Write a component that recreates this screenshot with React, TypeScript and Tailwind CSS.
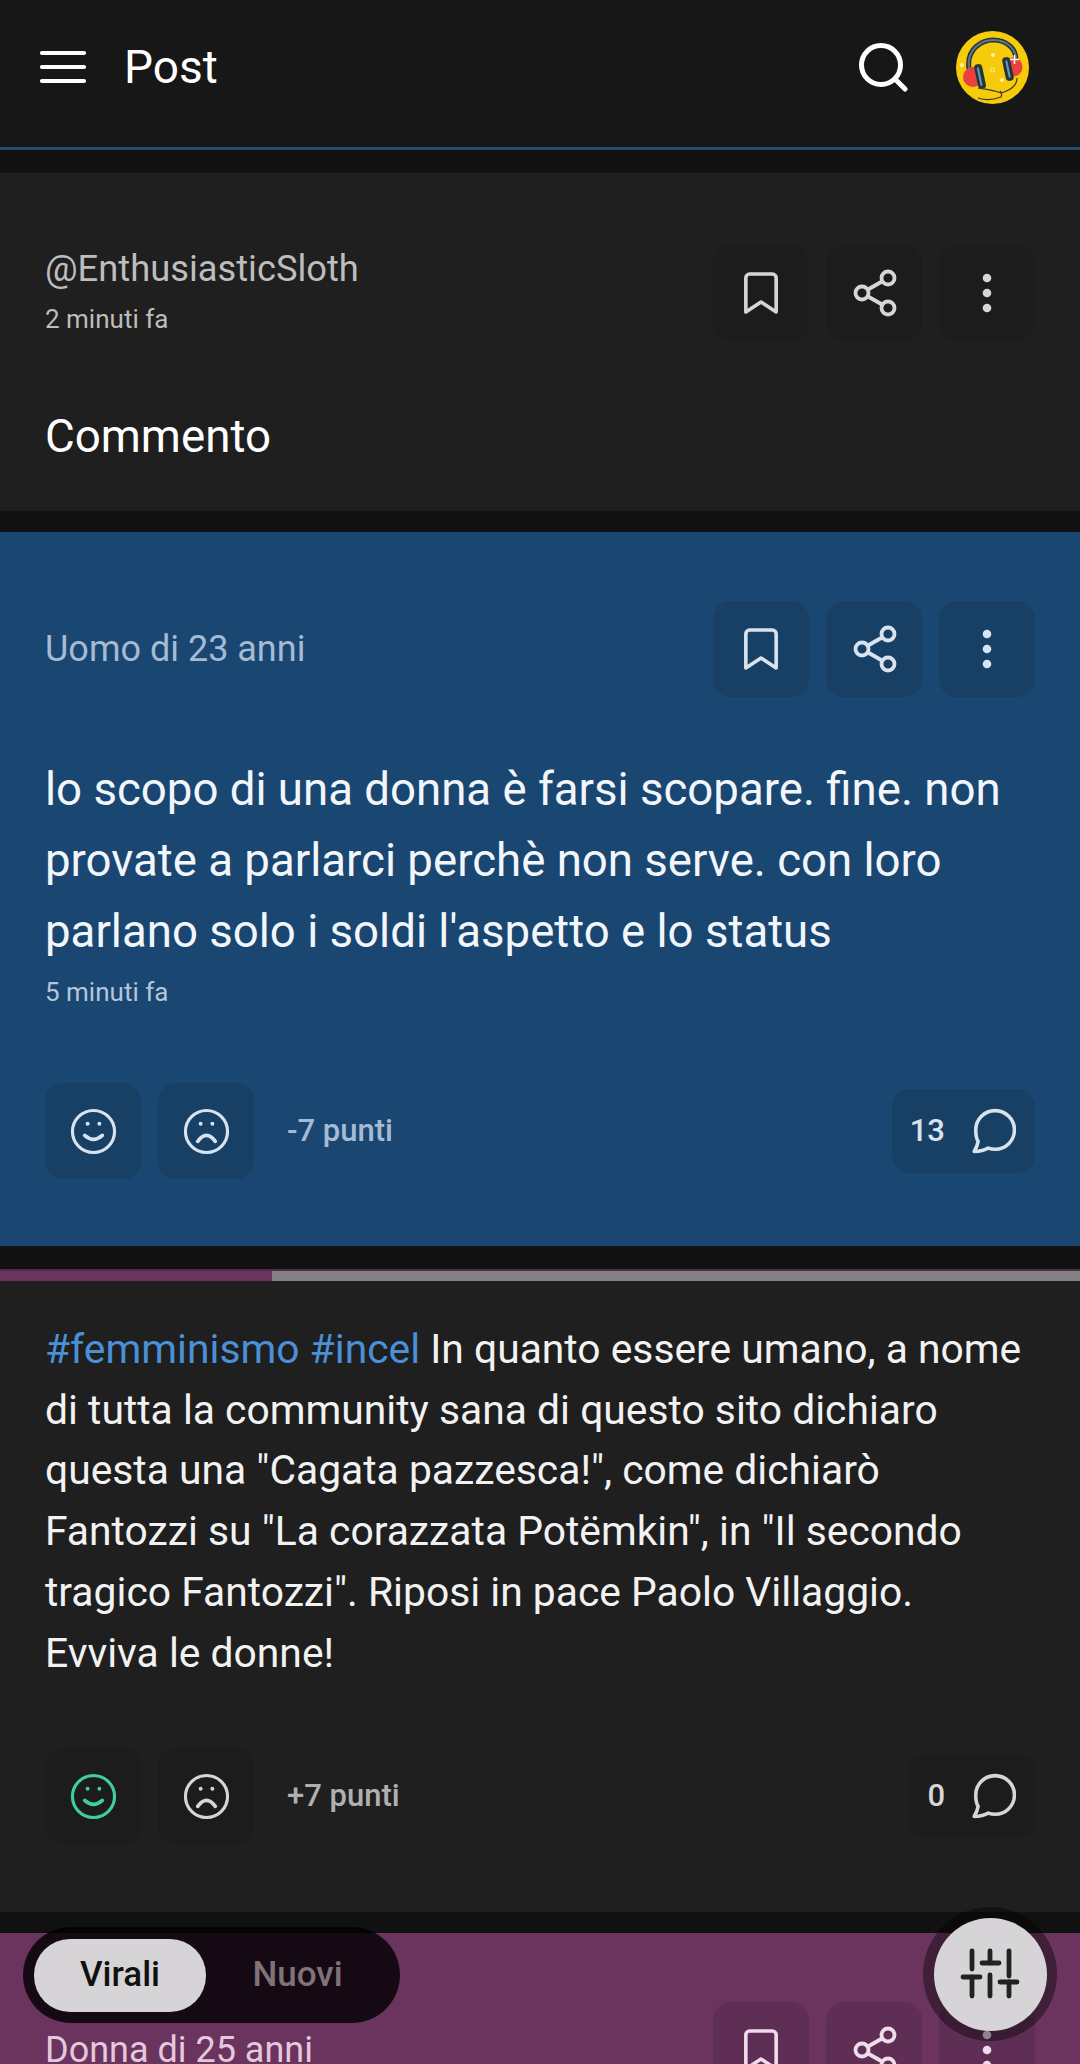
function Smile({ className }: { className?: string }) {
  return (
    <svg viewBox="0 0 48 48" fill="none" stroke="currentColor" strokeWidth="3.200" strokeLinecap="round" className={className}>
      <circle cx="24" cy="24" r="21.500" />
      <path d="M15 28Q24 36 33 28" strokeWidth="3.800" />
      <circle cx="18" cy="16" r="2" fill="currentColor" stroke="none" />
      <circle cx="30" cy="16" r="2" fill="currentColor" stroke="none" />
    </svg>
  );
}

function Frown({ className }: { className?: string }) {
  return (
    <svg viewBox="0 0 48 48" fill="none" stroke="currentColor" strokeWidth="3.200" strokeLinecap="round" className={className}>
      <circle cx="24" cy="24" r="21.500" />
      <path d="M15 34Q24 22 33 34" strokeWidth="3.800" />
      <circle cx="18" cy="16" r="2" fill="currentColor" stroke="none" />
      <circle cx="30" cy="16" r="2" fill="currentColor" stroke="none" />
    </svg>
  );
}

function Bubble({ className }: { className?: string }) {
  return (
    <svg viewBox="0 0 44 44" fill="none" stroke="currentColor" strokeWidth="3.400" strokeLinejoin="round" className={className}>
      <path d="M24 2.500c10.200 0 18.500 8.200 18.500 18.500S34.200 39.500 24 39.500c-2.500 0-4.500-.4-6.500-1.200-3.500 2.200-8 3.200-13.500 3.200 1.800-3 3.300-6 3.800-9.700C5.800 29 5.500 25 5.500 21 5.500 10.700 13.800 2.500 24 2.500Z" />
    </svg>
  );
}

function BookmarkIcon() {
  return (
    <svg viewBox="0 0 38 46" className="w-[36px] h-[44px]" fill="none" stroke="currentColor" strokeWidth="3.800" strokeLinejoin="round" strokeLinecap="round">
      <path d="M3 7a4 4 0 0 1 4-4h24a4 4 0 0 1 4 4v36L19 32.500 3 43Z" />
    </svg>
  );
}

function ShareIcon() {
  return (
    <svg viewBox="0 0 48 48" className="w-12 h-12 ml-[2px]" fill="none" stroke="currentColor" strokeWidth="3.800">
      <circle cx="11" cy="24" r="6.500" />
      <circle cx="37" cy="9" r="6.500" />
      <circle cx="37" cy="39" r="6.500" />
      <path d="M17 20.500 31 12.500M17 27.500 31 35.500" />
    </svg>
  );
}

function DotsIcon() {
  return (
    <svg viewBox="0 0 12 44" className="w-3 h-11" fill="currentColor">
      <circle cx="6" cy="7" r="4.300" />
      <circle cx="6" cy="22" r="4.300" />
      <circle cx="6" cy="37" r="4.300" />
    </svg>
  );
}

function Avatar() {
  return (
    <svg viewBox="0 0 73 73" className="w-[73px] h-[73px]">
      <circle cx="36.500" cy="36.500" r="36.500" fill="#f6cb0c" />
      <path d="M13 38C10 16 28 9 37 9c14 0 24 9 23 22" fill="none" stroke="#26343a" strokeWidth="5" />
      <path d="M13 38C10 16 28 9 37 9c14 0 24 9 23 22" fill="none" stroke="#63787c" strokeWidth="2" />
      <circle cx="17" cy="46" r="10" fill="#e8413f" />
      <circle cx="57" cy="36" r="9.500" fill="#e8413f" />
      <rect x="20" y="33" width="8" height="25" rx="3.500" transform="rotate(-12 24 45)" fill="#26343a" />
      <rect x="22.500" y="36" width="2" height="19" rx="1" transform="rotate(-12 24 45)" fill="#5f9fb8" />
      <rect x="48" y="26" width="8" height="24" rx="3.500" transform="rotate(-12 52 38)" fill="#26343a" />
      <rect x="51" y="29" width="2" height="18" rx="1" transform="rotate(-12 52 38)" fill="#5f9fb8" />
      <path d="M61 47c0 9-9 13-16 15-7-3-16-4-23-5M44 60c2 2 2 4 1 6-8 3-17 3-23 1" fill="none" stroke="#3a3a20" strokeWidth="1.200" />
      <circle cx="36.500" cy="39" r="2" fill="none" stroke="#fff3a0" strokeWidth="1" />
      <circle cx="37" cy="24" r="2" fill="#fff3a0" />
      <circle cx="46" cy="49" r="2" fill="#fff3a0" />
      <circle cx="6" cy="34" r="2" fill="#fff3a0" />
      <path d="M58.500 24v9M54 28.500h9" stroke="#fff" strokeWidth="1.500" />
    </svg>
  );
}

function ActionButtons({ bg, fg }: { bg: string; fg: string }) {
  const base = `w-24 h-24 rounded-[18px] flex items-center justify-center ${bg} ${fg}`;
  return (
    <div className="flex gap-[17px]">
      <div className={base}>
        <BookmarkIcon />
      </div>
      <div className={base}>
        <ShareIcon />
      </div>
      <div className={base}>
        <DotsIcon />
      </div>
    </div>
  );
}

function Votes({
  bg,
  fg,
  smileFg,
  points,
  pointsFg,
  count,
  countW,
}: {
  bg: string;
  fg: string;
  smileFg: string;
  points: string;
  pointsFg: string;
  count: string;
  countW: string;
}) {
  const base = `w-24 h-24 rounded-[18px] flex items-center justify-center ${bg}`;
  return (
    <div className="flex items-center justify-between">
      <div className="flex items-center gap-[17px]">
        <div className={`${base} ${smileFg}`}>
          <Smile className="w-[47px] h-[47px]" />
        </div>
        <div className={`${base} ${fg}`}>
          <Frown className="w-[47px] h-[47px]" />
        </div>
        <span className={`ml-[16px] text-[31px] font-medium ${pointsFg}`}>{points}</span>
      </div>
      <div className={`${countW} h-[84px] rounded-[18px] flex items-center justify-end pr-[19px] gap-[25px] ${bg} ${fg}`}>
        <span className="text-[31px] font-medium">{count}</span>
        <Bubble className="w-[46px] h-[46px]" />
      </div>
    </div>
  );
}

export default function App() {
  return (
    <div className="relative w-[1080px] h-[2064px] overflow-hidden bg-[#111111] font-['Roboto',sans-serif]">
      <header className="h-[150px] bg-[#171717] border-b-[3px] border-[#234b70] flex items-center pl-[39px] pr-[51px] pb-[13px]">
        <svg viewBox="0 0 48 36" className="w-12 h-9" fill="none" stroke="#fff" strokeWidth="4.200" strokeLinecap="round">
          <path d="M3 4h42M3 18h42M3 32h42" />
        </svg>
        <h1 className="ml-[37px] text-[46px] text-white flex-1">Post</h1>
        <svg viewBox="0 0 50 50" className="w-[50px] h-[50px] mr-[48px]" fill="none" stroke="#fff" strokeWidth="5" strokeLinecap="round">
          <circle cx="23" cy="23" r="19.500" />
          <path d="M37 37 47 47" />
        </svg>
        <Avatar />
      </header>

      <section className="mt-[23px] h-[338px] bg-[#1f1f1f] px-[45px] pt-[72px]">
        <div className="flex items-center justify-between">
          <div className="mb-[6px]">
            <div className="text-[36.300px] leading-[44px] text-[#bdbdbd]">@EnthusiasticSloth</div>
            <div className="mt-[13px] text-[26px] leading-[30px] text-[#bdbdbd]">2 minuti fa</div>
          </div>
          <ActionButtons bg="bg-[#1c1c1c]" fg="text-[#d6d6d6]" />
        </div>
        <div className="mt-[69px] text-[45.700px] leading-[54px] text-white">Commento</div>
      </section>

      <section className="mt-[21px] h-[714px] bg-[#1a4672] px-[45px] pt-[69px]">
        <div className="flex items-center justify-between">
          <div className="text-[36px] text-[#a4bbd3]">Uomo di 23 anni</div>
          <ActionButtons bg="bg-[#184065]" fg="text-[#d8e3ef]" />
        </div>
        <p className="mt-[57px] text-[45.600px] leading-[71px] text-[#f2f6fa]">
          lo scopo di una donna è farsi scopare. fine. non provate a parlarci perchè non serve. con loro parlano solo i
          soldi l'aspetto e lo status
        </p>
        <div className="mt-[10px] text-[26px] leading-[30px] text-[#b4c6da]">5 minuti fa</div>
        <div className="mt-[76px]">
          <Votes
            bg="bg-[#184065]"
            fg="text-[#d8e3ef]"
            smileFg="text-[#d8e3ef]"
            points="-7 punti"
            pointsFg="text-[#a4bbd3]"
            count="13"
            countW="w-[143px]"
          />
        </div>
      </section>

      <div className="mt-[23px] h-[12px] flex border-t-[2px] border-[#54294b]">
        <div className="w-[272px] bg-[#6b3460]" />
        <div className="flex-1 bg-[#838181]" />
      </div>

      <section className="h-[631px] bg-[#1f1f1f] px-[45px] pt-[38px]">
        <p className="text-[40.800px] leading-[60.700px] text-[#f2f2f2]">
          <span className="text-[#4a90d9]">#femminismo #incel</span> In quanto essere umano, a nome di tutta la community
          sana di questo sito dichiaro questa una "Cagata pazzesca!", come dichiarò Fantozzi su "La corazzata Potëmkin", in
          "Il secondo tragico Fantozzi". Riposi in pace Paolo Villaggio. Evviva le donne!
        </p>
        <div className="mt-[65px]">
          <Votes
            bg="bg-[#1c1c1c]"
            fg="text-[#d6d6d6]"
            smileFg="text-[#3ecf9b]"
            points="+7 punti"
            pointsFg="text-[#b0b0b0]"
            count="0"
            countW="w-[126px]"
          />
        </div>
      </section>

      <section className="mt-[21px] h-[300px] bg-[#6b345f] px-[45px] pt-[69px]">
        <div className="flex items-center justify-between">
          <div className="text-[36px] text-[#e3c9dc]">Donna di 25 anni</div>
          <ActionButtons bg="bg-[#5f2e55]" fg="text-[#f0dcea]" />
        </div>
      </section>

      <div className="absolute left-[23px] top-[1927px] w-[377px] h-[96px] rounded-[48px] bg-black/80 flex items-center px-[11px]">
        <div className="w-[172px] h-[73px] rounded-[36px] bg-[#d6d4d7] flex items-center justify-center text-[35px] font-medium text-[#111]">
          Virali
        </div>
        <div className="flex-1 text-center text-[35px] font-medium text-[#7f7279]">Nuovi</div>
      </div>

      <div className="absolute left-[923px] top-[1907px] w-[134px] h-[134px] rounded-full bg-black/40 flex items-center justify-center">
        <div className="w-[113px] h-[113px] rounded-full bg-[#d6d4d7] flex items-center justify-center">
          <svg viewBox="0 0 60 54" className="w-[60px] h-[54px]" fill="none" stroke="#222222" strokeWidth="4.800" strokeLinecap="round">
            <path d="M12 4v18M12 30v19M30 4v12M30 28v21M49 4v25M49 35v14" />
            <path d="M3 30h17M22 16h17M40 35h17" />
          </svg>
        </div>
      </div>
    </div>
  );
}
